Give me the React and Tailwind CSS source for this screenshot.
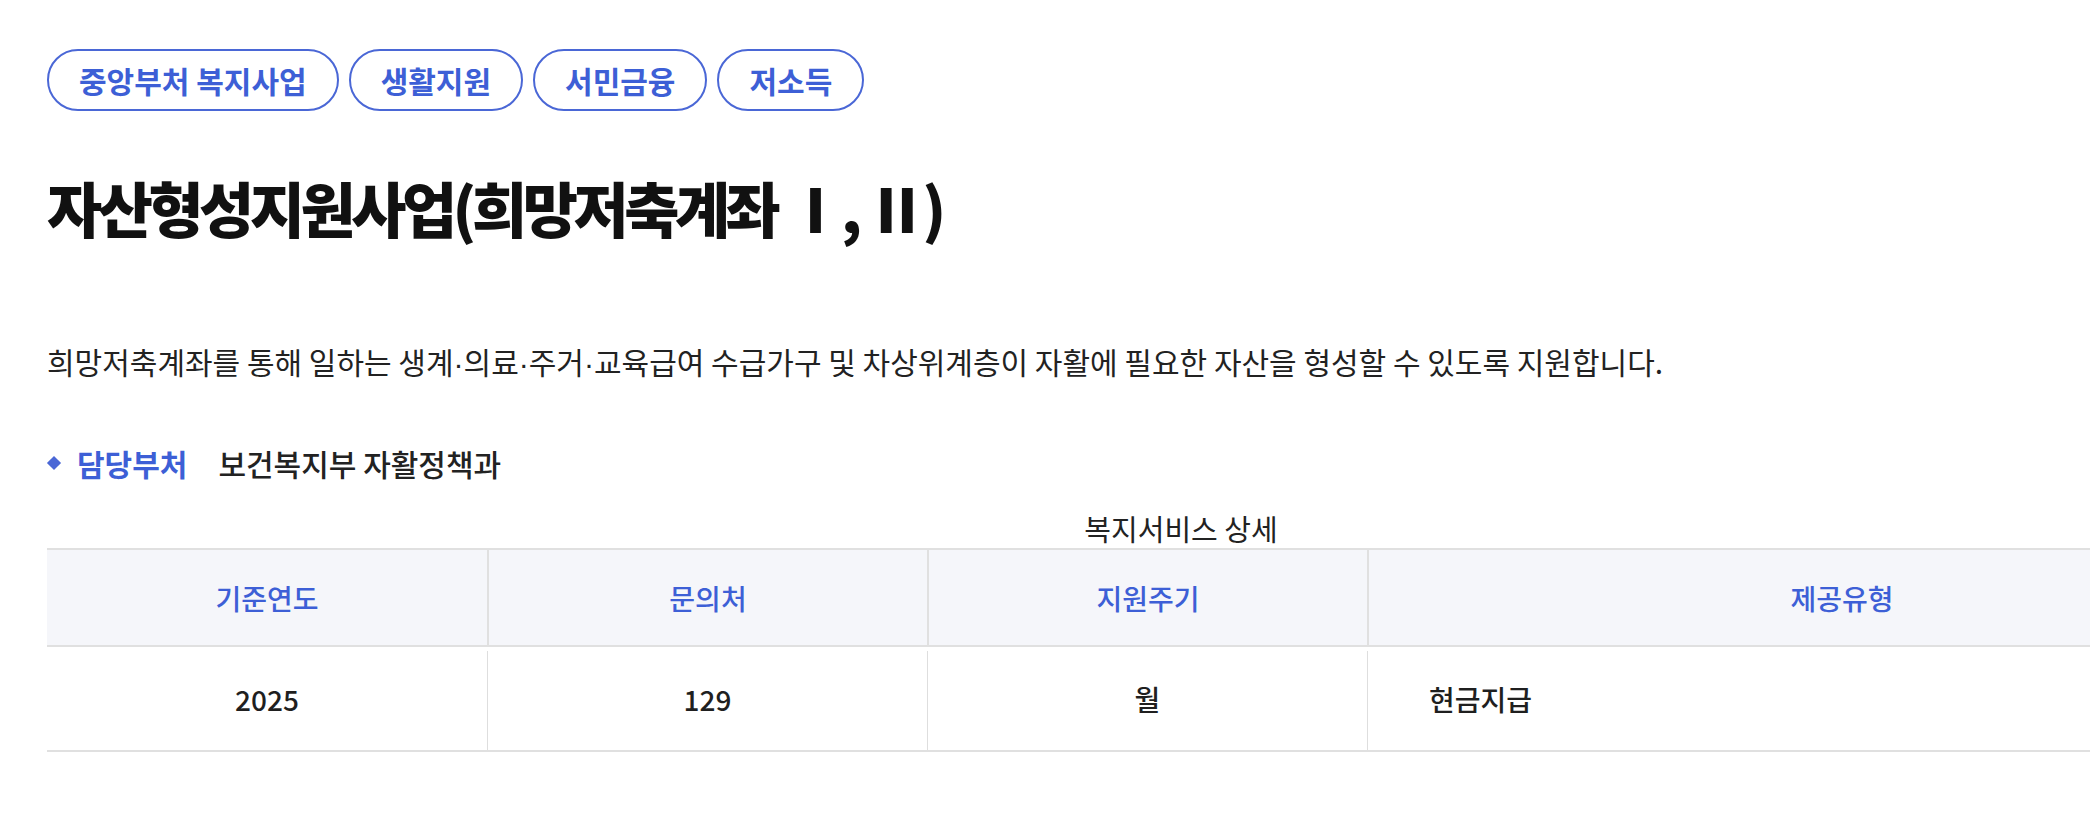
import React from 'react';

const tags = ['중앙부처 복지사업', '생활지원', '서민금융', '저소득'];

const columns = [
    { label: '기준연도', value: '2025' },
    { label: '문의처', value: '129' },
    { label: '지원주기', value: '월' },
    { label: '제공유형', value: '현금지급', left: true },
];

// 가운뎃점은 좁은 글꼴로 (CJK 글꼴에선 너무 넓게 잡힘)
const Dot = () => <span className="font-['Liberation_Sans',sans-serif]">·</span>;

const App = () => {
    return (
        <div className="w-full min-h-screen overflow-hidden bg-white text-[#1f1f1f] font-['Noto_Sans_CJK_KR','Noto_Sans',sans-serif]">
            <div className="w-[2315px] pl-[47px] pt-[49px]">
                {/* 분류 태그 */}
                <div className="flex gap-[10px]">
                    {tags.map((tag) => (
                        <span key={tag} className="h-[62px] px-[30px] flex items-center rounded-full border-2 border-[#4a67d6] text-[#3d5fd6] text-[30px] font-semibold">
                            {tag}
                        </span>
                    ))}
                </div>

                <h1 className="mt-[60px] text-[60px] leading-[72px] font-black tracking-[-0.075em] text-[#111]">
                    자산형성지원사업(희망저축계좌 Ⅰ, Ⅱ)
                </h1>

                <p className="mt-[98px] text-[30px] leading-[40px] text-[#222]">
                    희망저축계좌를 통해 일하는 생계<Dot />의료<Dot />주거<Dot />교육급여 수급가구 및 차상위계층이 자활에 필요한 자산을 형성할 수 있도록 지원합니다.
                </p>

                <div className="mt-[59px] flex items-center h-[40px] text-[30px]">
                    <span className="w-[10px] h-[10px] rotate-45 bg-[#4a67d6] ml-[2px] mr-[18px]" />
                    <span className="font-bold text-[#3d5fd6]">담당부처</span>
                    <span className="ml-[31px] font-medium text-[#222]">보건복지부 자활정책과</span>
                </div>

                {/* 복지서비스 상세 */}
                <div className="w-[2268px] mt-[25px]">
                    <div className="text-center text-[29px] leading-[40px] text-[#222]">복지서비스 상세</div>
                    <div className="border-t-2 border-b-2 border-[#e0e0e0]">
                        <div className="grid grid-cols-[440px_440px_440px_948px] h-[97px] bg-[#f5f6fa] border-b-2 border-[#e0e0e0]">
                            {columns.map((col, i) => (
                                <div key={col.label} className={`flex items-center justify-center text-[28px] font-medium text-[#3d5fd6] ${i > 0 ? 'border-l-2 border-[#e0e0e0]' : ''}`}>
                                    {col.label}
                                </div>
                            ))}
                        </div>
                        <div className="grid grid-cols-[440px_440px_440px_948px] h-[103px]">
                            {columns.map((col, i) => (
                                <div key={col.label} className={`flex items-center text-[28px] font-medium text-[#1f1f1f] mt-[4px] ${col.left ? 'justify-start pl-[61px]' : 'justify-center'} ${i > 0 ? 'border-l border-[#dedede]' : ''}`}>
                                    <span className="-mt-[4px]">{col.value}</span>
                                </div>
                            ))}
                        </div>
                    </div>
                </div>
            </div>
        </div>
    );
};

export default App;
